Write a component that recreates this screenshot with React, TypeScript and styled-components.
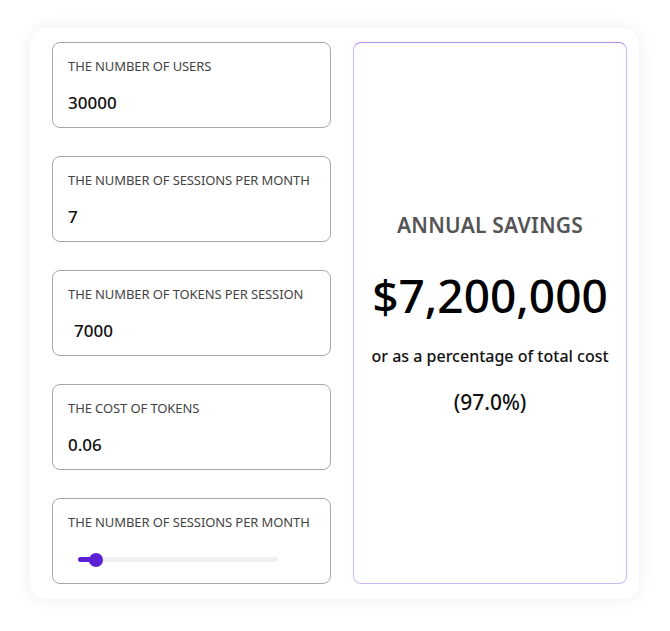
import React, { useState } from 'react';
import styled, { createGlobalStyle } from 'styled-components';

const GlobalStyle = createGlobalStyle`
  body {
    margin: 0;
    background: #ffffff;
    font-family: 'Noto Sans', 'Open Sans', sans-serif;
  }
`;

const Page = styled.div`
  padding: 28px 31px 32px 30px;
`;

const Card = styled.div`
  display: grid;
  grid-template-columns: 279px 1fr;
  gap: 22px;
  padding: 14px 12px 15px 22px;
  background: #fff;
  border-radius: 16px;
  box-shadow: 0 0 18px rgba(0, 0, 0, 0.07);
`;

const Inputs = styled.div`
  display: flex;
  flex-direction: column;
  gap: 28px;
`;

const Field = styled.div`
  height: 86px;
  box-sizing: border-box;
  border: 1px solid #a8a8a8;
  border-radius: 8px;
  padding: 15px 15px 0;
`;

const Label = styled.div`
  font-size: 13px;
  color: #444;
  letter-spacing: -0.1px;
  line-height: 16px;
`;

const Value = styled.div<{ $indent?: number }>`
  margin-top: 19px;
  padding-left: ${p => p.$indent || 0}px;
  font-size: 17px;
  font-weight: 500;
  color: #111;
  line-height: 20px;
`;

const Track = styled.div`
  position: relative;
  margin: 27px 0 0 10px;
  width: 200px;
  height: 5px;
  border-radius: 3px;
  background: #eef0f4;
`;

const Fill = styled.div`
  height: 100%;
  border-radius: 3px;
  background: #5b1fd6;
`;

const Thumb = styled.div`
  position: absolute;
  top: 50%;
  width: 14px;
  height: 14px;
  margin: -7px 0 0 -7px;
  border-radius: 50%;
  background: #5b1fd6;
`;

const Result = styled.div`
  border: 1px solid #cdb8f5;
  border-top-color: #b08af0;
  border-radius: 8px;
  display: flex;
  flex-direction: column;
  align-items: center;
  justify-content: center;
  text-align: center;
`;

const Heading = styled.div`
  font-size: 21px;
  font-weight: 600;
  color: #555;
  letter-spacing: 0.2px;
  line-height: 28px;
`;

const Amount = styled.div`
  margin-top: 26px;
  font-size: 46px;
  font-weight: 500;
  color: #000;
  line-height: 60px;
`;

const Note = styled.div`
  margin-top: 20px;
  font-size: 16px;
  font-weight: 500;
  color: #111;
  line-height: 22px;
`;

const Percent = styled.div`
  margin-top: 21px;
  font-size: 21px;
  font-weight: 500;
  color: #111;
  line-height: 28px;
`;

const fields = [
  { label: 'THE NUMBER OF USERS', value: '30000' },
  { label: 'THE NUMBER OF SESSIONS PER MONTH', value: '7' },
  { label: 'THE NUMBER OF TOKENS PER SESSION', value: '7000', indent: 6 },
  { label: 'THE COST OF TOKENS', value: '0.06' },
];

const App: React.FC = () => {
  const [slider] = useState(9);

  return (
    <Page>
      <GlobalStyle />
      <Card>
        <Inputs>
          {fields.map(f => (
            <Field key={f.label}>
              <Label>{f.label}</Label>
              <Value $indent={f.indent}>{f.value}</Value>
            </Field>
          ))}
          <Field>
            <Label>THE NUMBER OF SESSIONS PER MONTH</Label>
            <Track>
              <Fill style={{ width: `${slider}%` }} />
              <Thumb style={{ left: `${slider}%` }} />
            </Track>
          </Field>
        </Inputs>
        <Result>
          <Heading>ANNUAL SAVINGS</Heading>
          <Amount>$7,200,000</Amount>
          <Note>or as a percentage of total cost</Note>
          <Percent>(97.0%)</Percent>
        </Result>
      </Card>
    </Page>
  );
};

export default App;
